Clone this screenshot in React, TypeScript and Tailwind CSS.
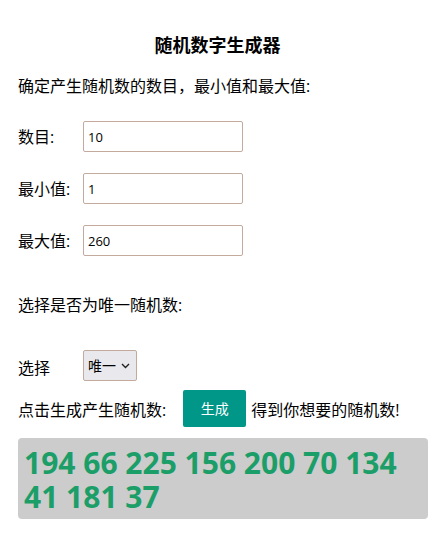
import React from "react";

export default function App() {
  const font = { fontFamily: "'Open Sans', 'Noto Sans CJK SC', sans-serif" };
  return (
    <div className="w-[435px] min-h-[538px] bg-white text-black" style={font}>
      <div className="pl-[18px] pr-[7px] pt-[34px]">
        <h1 className="text-center text-[18px] font-bold leading-[22px] pr-[11px]">随机数字生成器</h1>
        <p className="mt-[19px] text-[16px] leading-[22px]">确定产生随机数的数目，最小值和最大值:</p>

        {[
          ["数目:", "10"],
          ["最小值:", "1"],
          ["最大值:", "260"],
        ].map(([label, value], i) => (
          <div key={label} className={`flex items-center ${i === 0 ? "mt-[24px]" : "mt-[21px]"}`}>
            <span className="w-[65px] text-[16px] leading-[22px]">{label}</span>
            <input
              readOnly
              value={value}
              className="w-[160px] h-[31px] border border-[#c2ab9c] rounded-[2px] px-[4px] text-[13px] outline-none"
            />
          </div>
        ))}

        <p className="mt-[38px] text-[16px] leading-[22px]">选择是否为唯一随机数:</p>

        <div className="mt-[34px] flex items-center">
          <span className="w-[65px] text-[16px] leading-[22px] pt-[4px]">选择</span>
          <div className="relative w-[54px] h-[31px] border border-[#c2ab9c] rounded-[2px] bg-[#e9e9ed] flex items-center pl-[4px]">
            <span className="text-[14px] leading-none">唯一</span>
            <svg className="absolute right-[6px] top-[12px]" width="9" height="6" viewBox="0 0 9 6">
              <path d="M1 1 L4.5 4.5 L8 1" fill="none" stroke="#222" strokeWidth="1.4" />
            </svg>
          </div>
        </div>

        <div className="mt-[9px] flex items-center">
          <span className="text-[16px] leading-[22px] pt-[3px]">点击生成产生随机数:</span>
          <button className="ml-[17px] w-[63px] h-[37px] bg-[#009688] text-white text-[14px] rounded-[2px]">生成</button>
          <span className="ml-[5px] text-[16px] leading-[22px] pt-[3px]">得到你想要的随机数!</span>
        </div>

        <div className="mt-[11px] w-[410px] bg-[#cccccc] rounded-[4px] pl-[6px] pt-[8px] pb-[5px]">
          <div className="text-[30px] font-bold leading-[34px] text-[#1b9e68]">194 66 225 156 200 70 134 41 181 37</div>
        </div>
      </div>
    </div>
  );
}
